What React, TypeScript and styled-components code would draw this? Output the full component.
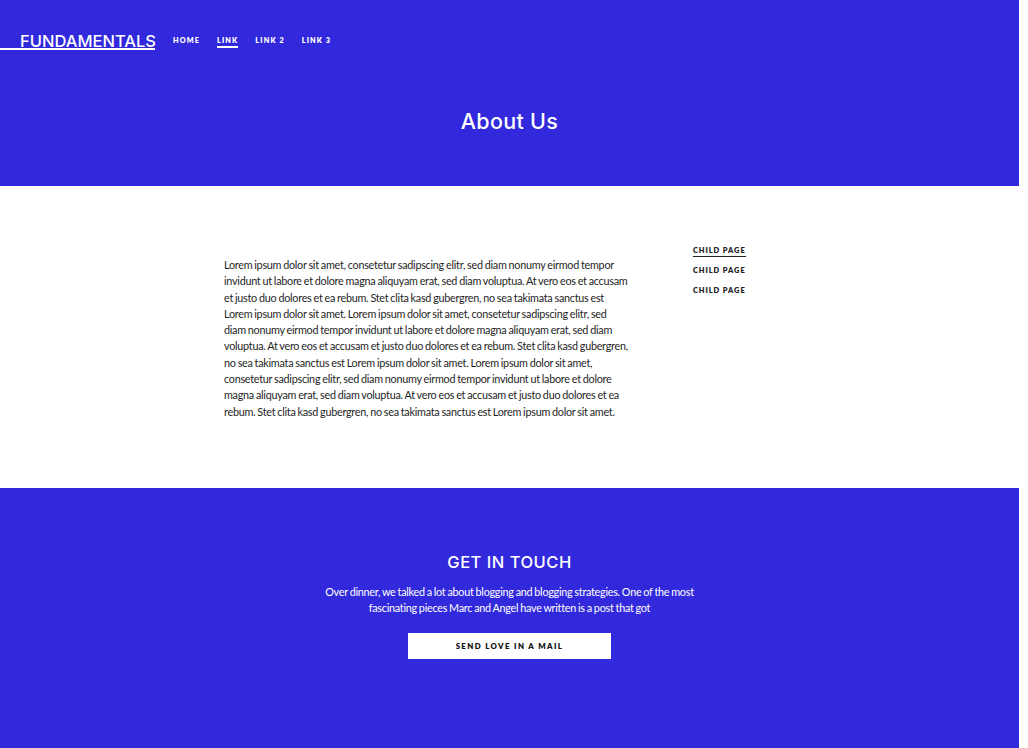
import React from "react";
import styled, { createGlobalStyle } from "styled-components";

const Global = createGlobalStyle`
  html, body { margin: 0; padding: 0; background: #fff; }
  body { font-family: "Lato", "Liberation Sans", sans-serif; }
  * { box-sizing: border-box; }
`;

const BLUE = "#3229dd";

const Page = styled.div`
  width: 1019px;
`;

const Hero = styled.header`
  background: ${BLUE};
  height: 186px;
  display: flex;
  flex-direction: column;
`;

const NavBar = styled.nav`
  display: flex;
  align-items: flex-start;
  padding-top: 34px;
`;

const Logo = styled.a`
  display: block;
  width: 155px;
  padding-left: 20px;
  font-family: "Inter", "DejaVu Sans", sans-serif;
  font-weight: 500;
  font-size: 16.5px;
  line-height: 14px;
  color: #fff;
  border-bottom: 2px solid #fff;
`;

const NavList = styled.ul`
  display: flex;
  list-style: none;
  margin: 3px 0 0 18px;
  padding: 0;
  gap: 17px;
`;

const NavItem = styled.li<{ $active?: boolean }>`
  font-family: "Lato", sans-serif;
  font-weight: 800;
  font-size: 7.2px;
  line-height: 8px;
  letter-spacing: 1.15px;
  color: #fff;
  padding-bottom: 1px;
  border-bottom: 2px solid ${(p) => (p.$active ? "#fff" : "transparent")};
`;

const HeroTitle = styled.h1`
  margin: 59px 0 0;
  text-align: center;
  font-family: "Inter", "DejaVu Sans", sans-serif;
  font-weight: 500;
  font-size: 21.5px;
  line-height: 24px;
  letter-spacing: 0.3px;
  color: #fff;
`;

const Main = styled.main`
  display: flex;
  justify-content: center;
  padding: 59px 0 0 0;
  height: 302px;
`;

const Article = styled.p`
  width: 406px;
  margin: 12px 0 0;
  font-family: "Lato", sans-serif;
  font-size: 10.8px;
  line-height: 16.3px;
  letter-spacing: -0.26px;
  word-spacing: -0.5px;
  color: #1e1e1e;
`;

const Side = styled.ul`
  list-style: none;
  margin: 0 0 0 63px;
  padding: 0;
  width: 102px;
  display: flex;
  flex-direction: column;
  gap: 9px;
`;

const SideLink = styled.li<{ $active?: boolean }>`
  font-family: "Lato", sans-serif;
  font-weight: 800;
  font-size: 7.4px;
  letter-spacing: 0.95px;
  color: #222;
  line-height: 11px;
  span {
    padding-bottom: 0.5px;
    border-bottom: 1.5px solid ${(p) => (p.$active ? "#222" : "transparent")};
  }
`;

const Footer = styled.footer`
  background: ${BLUE};
  height: 260px;
  display: flex;
  flex-direction: column;
  align-items: center;
  padding-top: 64px;
`;

const FooterTitle = styled.h2`
  margin: 0;
  font-family: "Inter", "DejaVu Sans", sans-serif;
  font-weight: 500;
  font-size: 16.5px;
  letter-spacing: 0.5px;
  color: #fff;
`;

const FooterText = styled.p`
  width: 380px;
  margin: 12px 0 0;
  text-align: center;
  font-family: "Lato", sans-serif;
  font-size: 10.8px;
  line-height: 16.3px;
  letter-spacing: -0.26px;
  word-spacing: -0.5px;
  color: #fff;
`;

const Button = styled.button`
  margin-top: 16px;
  width: 203px;
  height: 26px;
  border: none;
  background: #fff;
  font-family: "Lato", sans-serif;
  font-weight: 800;
  font-size: 7.8px;
  letter-spacing: 1.4px;
  color: #111;
  cursor: pointer;
`;

export default function App() {
  return (
    <Page>
      <Global />
      <Hero>
        <NavBar>
          <Logo>FUNDAMENTALS</Logo>
          <NavList>
            <NavItem>HOME</NavItem>
            <NavItem $active>LINK</NavItem>
            <NavItem>LINK 2</NavItem>
            <NavItem>LINK 3</NavItem>
          </NavList>
        </NavBar>
        <HeroTitle>About Us</HeroTitle>
      </Hero>
      <Main>
        <Article>
          Lorem ipsum dolor sit amet, consetetur sadipscing elitr, sed diam nonumy eirmod tempor
          invidunt ut labore et dolore magna aliquyam erat, sed diam voluptua. At vero eos et accusam
          et justo duo dolores et ea rebum. Stet clita kasd gubergren, no sea takimata sanctus est
          Lorem ipsum dolor sit amet. Lorem ipsum dolor sit amet, consetetur sadipscing elitr, sed
          diam nonumy eirmod tempor invidunt ut labore et dolore magna aliquyam erat, sed diam
          voluptua. At vero eos et accusam et justo duo dolores et ea rebum. Stet clita kasd gubergren,
          no sea takimata sanctus est Lorem ipsum dolor sit amet. Lorem ipsum dolor sit amet,
          consetetur sadipscing elitr, sed diam nonumy eirmod tempor invidunt ut labore et dolore
          magna aliquyam erat, sed diam voluptua. At vero eos et accusam et justo duo dolores et ea
          rebum. Stet clita kasd gubergren, no sea takimata sanctus est Lorem ipsum dolor sit amet.
        </Article>
        <Side>
          <SideLink $active><span>CHILD PAGE</span></SideLink>
          <SideLink><span>CHILD PAGE</span></SideLink>
          <SideLink><span>CHILD PAGE</span></SideLink>
        </Side>
      </Main>
      <Footer>
        <FooterTitle>GET IN TOUCH</FooterTitle>
        <FooterText>
          Over dinner, we talked a lot about blogging and blogging strategies. One of the most
          fascinating pieces Marc and Angel have written is a post that got
        </FooterText>
        <Button>SEND LOVE IN A MAIL</Button>
      </Footer>
    </Page>
  );
}
